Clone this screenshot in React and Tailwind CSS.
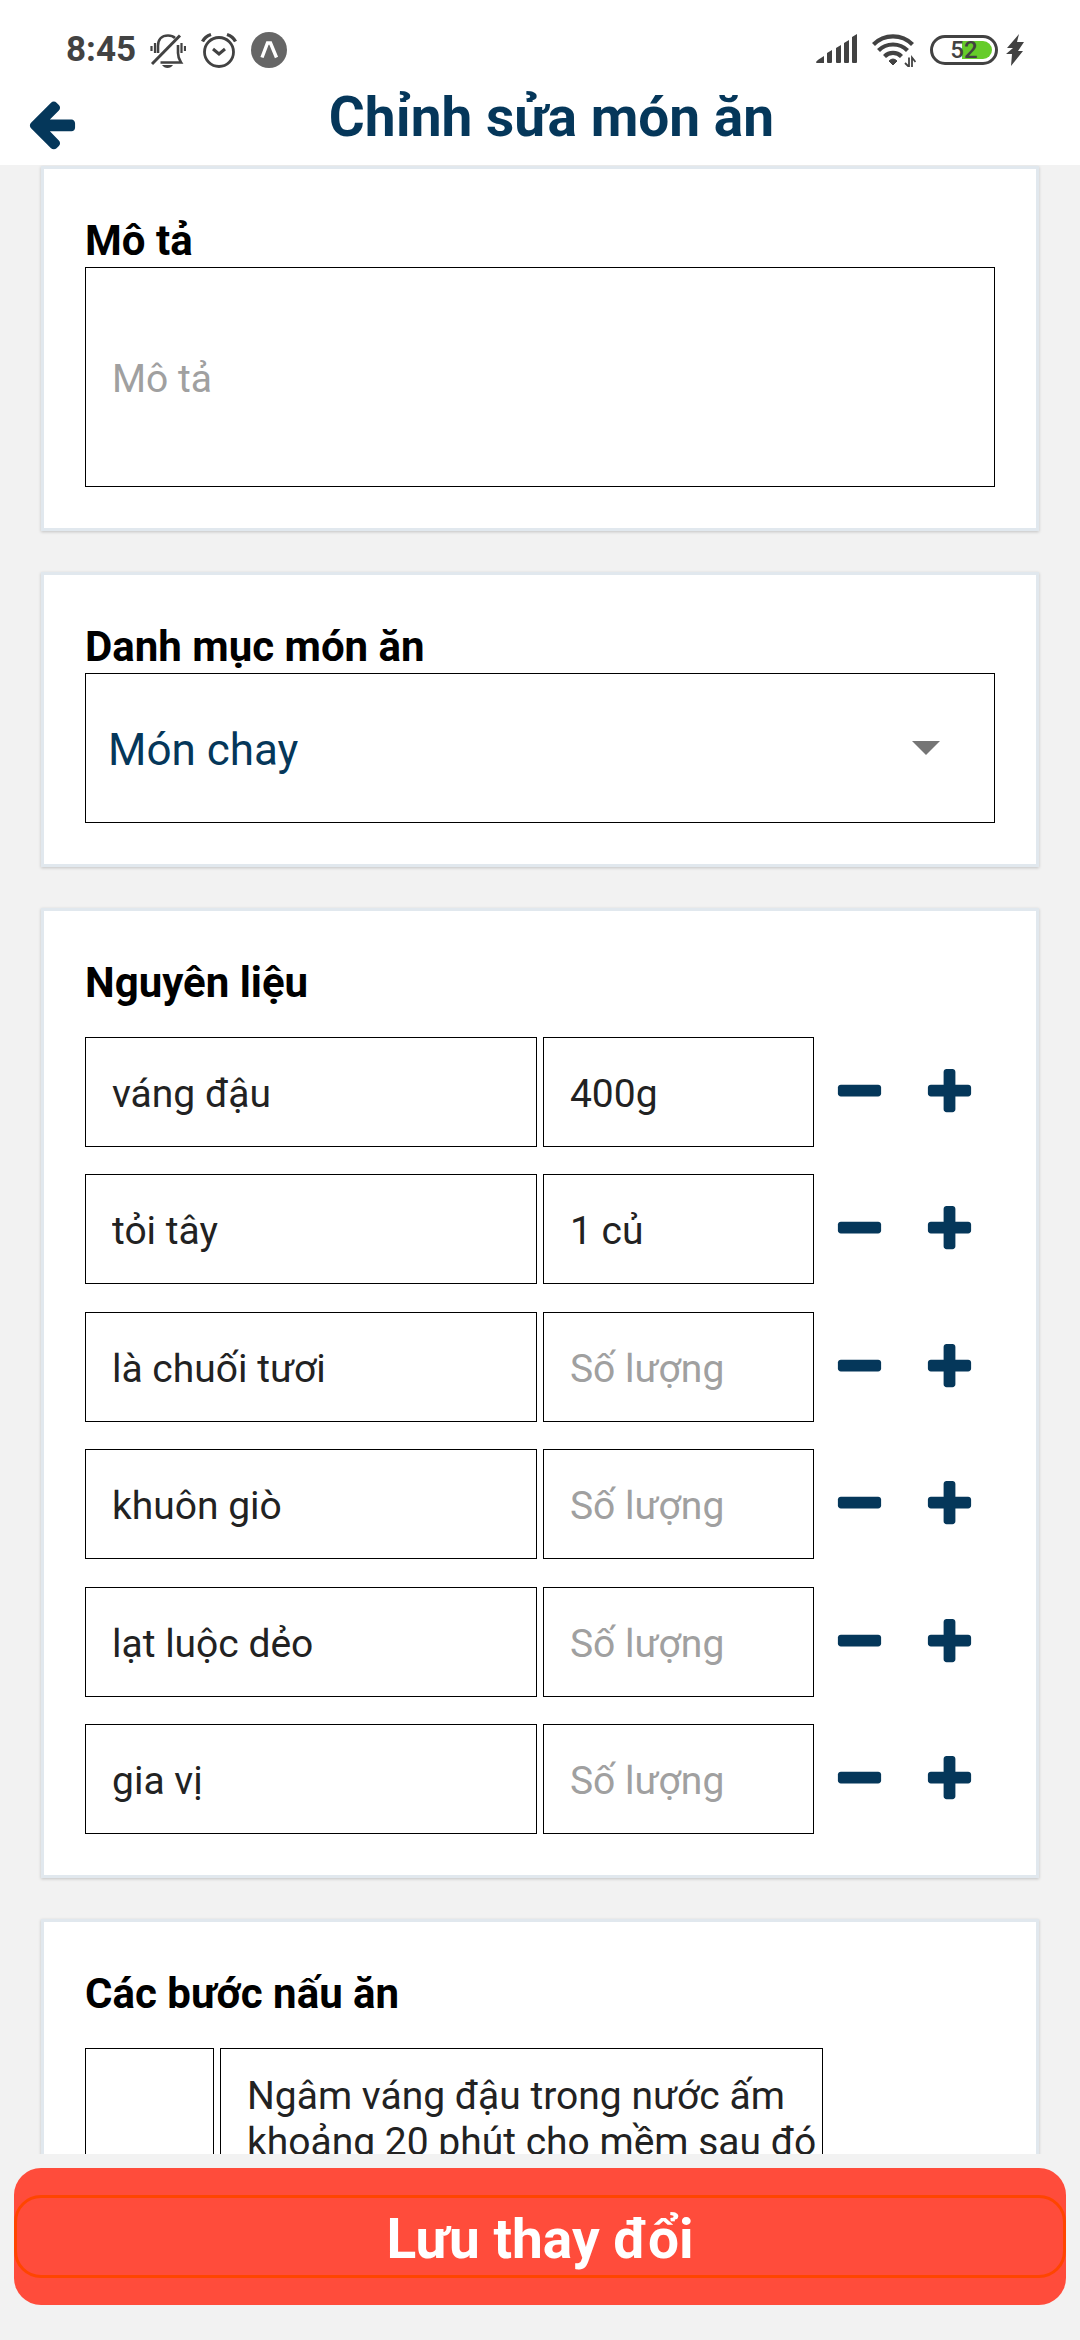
const INGREDIENTS = [
  { name: "váng đậu", amount: "400g" },
  { name: "tỏi tây", amount: "1 củ" },
  { name: "là chuối tươi", amount: "" },
  { name: "khuôn giò", amount: "" },
  { name: "lạt luộc dẻo", amount: "" },
  { name: "gia vị", amount: "" },
];

const STEPS = ["Ngâm váng đậu trong nước ấm khoảng 20 phút cho mềm sau đó"];

const FIELD =
  "block min-w-0 rounded-none border border-black bg-white pl-[26px] text-[39px] text-[#222222] outline-none placeholder:text-[#a0a0a0]";

function Glyph({ d }) {
  return (
    <svg viewBox="0 0 1792 1792" className="block size-[55px]" fill="currentColor" aria-hidden="true">
      <path d={d} />
    </svg>
  );
}

const ARROW_LEFT =
  "M1664 896v128q0 53-32.5 90.5t-84.5 37.5h-704l293 294q38 36 38 90t-38 90l-75 76q-37 37-90 37-52 0-91-37l-651-652q-37-37-37-90 0-52 37-91l651-650q38-38 91-38 52 0 90 38l75 74q38 38 38 91t-38 91l-293 293h704q52 0 84.5 37.5t32.5 90.5z";
const PLUS =
  "M1600 736v192q0 40-28 68t-68 28h-416v416q0 40-28 68t-68 28h-192q-40 0-68-28t-28-68v-416h-416q-40 0-68-28t-28-68v-192q0-40 28-68t68-28h416v-416q0-40 28-68t68-28h192q40 0 68 28t28 68v416h416q40 0 68 28t28 68z";
const MINUS =
  "M1600 736v192q0 40-28 68t-68 28h-1216q-40 0-68-28t-28-68v-192q0-40 28-68t68-28h1216q40 0 68 28t28 68z";

function StatusBar() {
  return (
    <div className="flex h-[94px] items-center justify-between pl-[66px] pr-[56px] pt-[6px] text-[#424242]">
      <div className="flex items-center">
        <span className="w-[70px] text-[35px] font-bold leading-[40px]">8:45</span>
        <svg className="ml-[14px] h-[36px] w-[36px]" viewBox="0 0 36 36" fill="none" stroke="currentColor" strokeWidth="2.6" aria-hidden="true">
          <path d="M8 21V14C8 7 12 3.500 18 3.500c3 0 5.500 1 7 2.500M28 13v8q0 5 3 9.500H10.500" />
          <path d="M2 32 30 3.500" strokeWidth="3" />
          <path d="M1.500 14v5M5 11v10M31.500 11v10M35 14v5" strokeWidth="2.2" />
          <path d="M12 33h11q-2 3-5.500 3T12 33Z" fill="currentColor" stroke="none" />
        </svg>
        <svg className="ml-[15px] h-[36px] w-[36px]" viewBox="0 0 36 36" fill="none" stroke="currentColor" strokeWidth="2.8" aria-hidden="true">
          <circle cx="18" cy="20" r="14.500" />
          <path d="M12 17 18 22l6-5" strokeWidth="3" />
          <path d="M1.500 9.500Q4 4.500 10 2.500M34.500 9.500Q32 4.500 26 2.500" strokeWidth="3.4" />
        </svg>
        <svg className="ml-[14px] h-[36px] w-[36px]" viewBox="0 0 36 36" fill="none" aria-hidden="true">
          <circle cx="18" cy="18" r="18" fill="#666" />
          <path d="M11 25.500 16.500 11h3L25.500 25.500" stroke="#fff" strokeWidth="3.4" />
        </svg>
      </div>
      <div className="flex items-center">
        <svg className="h-[32px] w-[41px]" viewBox="0 0 41 32" fill="currentColor" aria-hidden="true">
          <path d="M0 28Q1 26 8 22v7H1Q0 29 0 28ZM11 19l5-3v12q0 1-1 1h-3q-1 0-1-1ZM20 14l5-3v17q0 1-1 1h-3q-1 0-1-1ZM28 9l5-3v22q0 1-1 1h-3q-1 0-1-1ZM36 3l5-3v28q0 1-1 1h-3q-1 0-1-1Z" />
        </svg>
        <svg className="ml-[15px] h-[34px] w-[44px]" viewBox="0 0 44 34" fill="none" stroke="currentColor" strokeWidth="4.2" aria-hidden="true">
          <path d="M1.500 11.500a27.500 27.500 0 0 1 39 0M6.500 17.500a20.500 20.500 0 0 1 29 0M12.500 23.500a12 12 0 0 1 17 0" />
          <path d="M17 28q4-4 8 0l-4 4Z" fill="currentColor" stroke="currentColor" strokeWidth="1" />
          <path d="M37 24.500V34l-4-4M40 34v-9.500l3.500 4.500" strokeWidth="1.8" />
        </svg>
        <div className="ml-[14px] h-[30px] w-[68px] rounded-full border-[3px] border-[#424242] p-[3px]">
          <div className="flex h-full w-full items-center justify-center rounded-full bg-[linear-gradient(to_right,#fff_47%,#66cc2a_47%)]">
            <span className="text-[24px] font-medium leading-none">52</span>
          </div>
        </div>
        <svg className="ml-[8px] h-[32px] w-[18px]" viewBox="0 0 18 32" fill="currentColor" aria-hidden="true">
          <path d="M13 0 1 14h6L0 20h6L5 32 17 17h-5L18 8h-7Z" />
        </svg>
      </div>
    </div>
  );
}

function Card({ children }) {
  return (
    <section className="border-[3px] border-[#e1e8ee] bg-white p-[41px] shadow-[0_1px_3px_rgba(0,0,0,0.2)]">
      {children}
    </section>
  );
}

const LABEL = "block h-[57px] pt-[7px] text-[42px] font-bold leading-[48px] text-black";

function RowButtons() {
  return (
    <div className="mx-[18px] flex shrink-0 gap-[35px] text-[#05375a]">
      <button type="button" aria-label="Xoá dòng"><Glyph d={MINUS} /></button>
      <button type="button" aria-label="Thêm dòng"><Glyph d={PLUS} /></button>
    </div>
  );
}

export default function App() {
  return (
    <div className="flex h-screen flex-col bg-[#f2f2f2] font-[Roboto,sans-serif]">
      <header className="shrink-0 bg-white">
        <StatusBar />
        <div className="flex h-[71px] items-start px-[24px] text-[#05375a]">
          <button type="button" aria-label="Quay lại" className="pt-[2px]"><Glyph d={ARROW_LEFT} /></button>
          <h1 className="-mt-[9px] flex-1 pr-[32px] text-center text-[55px] font-bold leading-[64px]">Chỉnh sửa món ăn</h1>
        </div>
      </header>

      <main className="flex min-h-0 flex-1 flex-col gap-[41px] overflow-hidden px-[41px] pt-px *:shrink-0">
        <Card>
          <label htmlFor="description" className={LABEL}>Mô tả</label>
          <input id="description" placeholder="Mô tả" className={FIELD + " h-[220px] w-full pt-[3px]"} />
        </Card>

        <Card>
          <label htmlFor="category" className={LABEL}>Danh mục món ăn</label>
          <div className="relative">
            <select id="category" className="block h-[150px] w-full appearance-none rounded-none border border-black bg-white pl-[22px] pt-[3px] text-[44px] text-[#05375a] outline-none">
              <option>Món chay</option>
            </select>
            <svg className="pointer-events-none absolute right-[55px] top-[68px] h-[14px] w-[28px]" viewBox="0 0 28 14" fill="#757575" aria-hidden="true">
              <path d="M0 0h28L14 14Z" />
            </svg>
          </div>
        </Card>

        <Card>
          <h2 className={LABEL}>Nguyên liệu</h2>
          <ul className="pt-px">
            {INGREDIENTS.map((item) => (
              <li key={item.name} className="mt-[27px] flex items-center nth-[2n+3]:mt-[28px]">
                <div className="grid min-w-0 flex-1 grid-cols-[5fr_3fr] gap-[6px]">
                  <input aria-label="Nguyên liệu" defaultValue={item.name} className={FIELD + " h-[110px] w-full pt-[3px]"} />
                  <input aria-label="Số lượng" placeholder="Số lượng" defaultValue={item.amount} className={FIELD + " h-[110px] w-full pt-[3px]"} />
                </div>
                <RowButtons />
              </li>
            ))}
          </ul>
        </Card>

        <Card>
          <h2 className={LABEL}>Các bước nấu ăn</h2>
          <ul className="mt-[28px]">
            {STEPS.map((step) => (
              <li key={step} className="flex gap-[6px]">
                <input aria-label="Bước" className={FIELD + " h-[240px] w-[129px]"} />
                <textarea aria-label="Cách làm" defaultValue={step} className={FIELD + " mr-[172px] h-[240px] flex-1 resize-none overflow-hidden pt-[24px] leading-[46px]"} />
              </li>
            ))}
          </ul>
        </Card>
      </main>

      <footer className="shrink-0 px-[14px] pb-[35px] pt-[14px]">
        <button type="button" className="flex h-[137px] w-full items-center rounded-[27px] bg-[#ff4c3b] text-white">
          <span className="block w-full rounded-[27px] border-[3px] border-[#ff4500] pt-[5px] text-center text-[55px] font-bold leading-[72px]">Lưu thay đổi</span>
        </button>
      </footer>
    </div>
  );
}
